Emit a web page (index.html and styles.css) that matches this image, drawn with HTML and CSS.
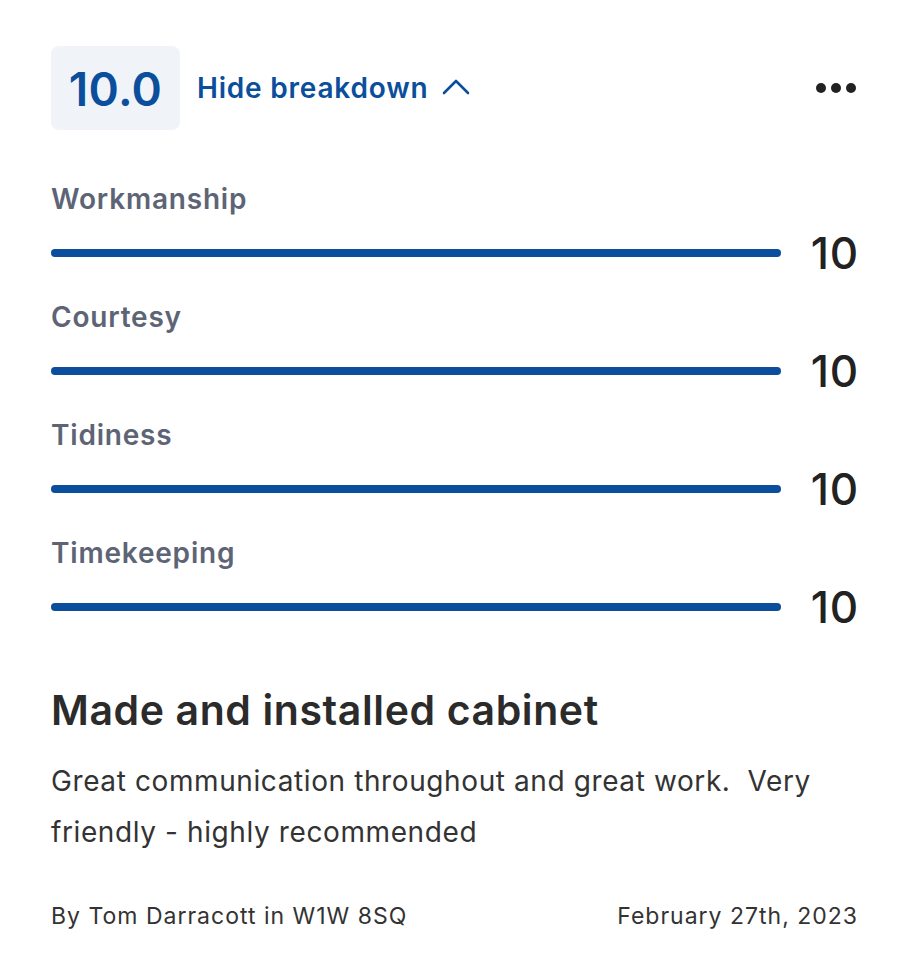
FILE: index.html
```html
<!DOCTYPE html>
<html lang="en">
<head>
    <meta charset="UTF-8">
    <meta name="viewport" content="width=device-width, initial-scale=1.0">
    <title>Review</title>
    <link rel="stylesheet" href="styles.css">
</head>
<body>
    <article class="review">
        <!-- Score header -->
        <header class="review-head">
            <div class="score-box">10.0</div>
            <button class="toggle">
                Hide breakdown
                <svg class="chevron" width="28" height="17" viewBox="0 0 28 17" fill="none">
                    <path d="M2 15 L14 3 L26 15" stroke="currentColor" stroke-width="2.6" stroke-linecap="round" stroke-linejoin="round"/>
                </svg>
            </button>
            <button class="more" aria-label="More">
                <span></span><span></span><span></span>
            </button>
        </header>

        <!-- Breakdown -->
        <ul class="breakdown">
            <li class="metric">
                <span class="metric-name">Workmanship</span>
                <div class="metric-row">
                    <div class="bar"><div class="bar-fill" style="width: 100%"></div></div>
                    <span class="metric-score">10</span>
                </div>
            </li>
            <li class="metric">
                <span class="metric-name">Courtesy</span>
                <div class="metric-row">
                    <div class="bar"><div class="bar-fill" style="width: 100%"></div></div>
                    <span class="metric-score">10</span>
                </div>
            </li>
            <li class="metric">
                <span class="metric-name">Tidiness</span>
                <div class="metric-row">
                    <div class="bar"><div class="bar-fill" style="width: 100%"></div></div>
                    <span class="metric-score">10</span>
                </div>
            </li>
            <li class="metric">
                <span class="metric-name">Timekeeping</span>
                <div class="metric-row">
                    <div class="bar"><div class="bar-fill" style="width: 100%"></div></div>
                    <span class="metric-score">10</span>
                </div>
            </li>
        </ul>

        <!-- Review body -->
        <h2 class="review-title">Made and installed cabinet</h2>
        <p class="review-text">Great communication throughout and great work.&nbsp; Very friendly - highly recommended</p>

        <footer class="review-foot">
            <span>By Tom Darracott in W1W 8SQ</span>
            <span>February 27th, 2023</span>
        </footer>
    </article>
</body>
</html>
```

FILE: styles.css
```css
/* Reset and base styles */
* {
    box-sizing: border-box;
    margin: 0;
    padding: 0;
}

body {
    font-family: Inter, "Noto Sans", Arial, sans-serif;
    background: #fff;
    color: #2b2b2b;
}

.review {
    padding: 46px 53px 0 51px;
}

/* Header */
.review-head {
    display: flex;
    align-items: center;
}

.score-box {
    width: 129px;
    height: 84px;
    display: flex;
    align-items: center;
    justify-content: center;
    background: #f0f4f9;
    border-radius: 8px;
    font-size: 46px;
    font-weight: 600;
    color: #0b4f9c;
    letter-spacing: 0.3px;
    padding-top: 2px;
}

.toggle {
    display: flex;
    align-items: center;
    gap: 14px;
    margin-left: 17px;
    background: none;
    border: none;
    font-family: inherit;
    font-size: 28px;
    font-weight: 600;
    letter-spacing: 0.8px;
    color: #0b4f9c;
    cursor: pointer;
}

.chevron {
    margin-top: -4px;
}

.more {
    display: flex;
    gap: 5px;
    margin-left: auto;
    margin-right: 2px;
    background: none;
    border: none;
    cursor: pointer;
}

.more span {
    width: 10px;
    height: 10px;
    border-radius: 50%;
    background: #222;
}

/* Breakdown */
.breakdown {
    list-style: none;
    margin-top: 52px;
}

.metric {
    height: 118px;
}

.metric-name {
    display: block;
    font-size: 28px;
    font-weight: 600;
    letter-spacing: 0.8px;
    color: #5d6475;
    line-height: 34px;
}

.metric-row {
    display: flex;
    align-items: center;
    gap: 30px;
    margin-top: 17px;
    height: 40px;
}

.bar {
    flex: 1;
    height: 8px;
    border-radius: 4px;
    background: #e4e9f0;
}

.bar-fill {
    height: 100%;
    border-radius: 4px;
    background: #0b4f9c;
}

.metric-score {
    font-size: 44px;
    font-weight: 500;
    letter-spacing: 0.8px;
    color: #222;
    line-height: 40px;
    margin-right: -1px;
}

/* Review body */
.review-title {
    margin-top: 30px;
    font-size: 41px;
    font-weight: 600;
    letter-spacing: 0.6px;
    color: #2b2b2b;
    line-height: 52px;
}

.review-text {
    margin-top: 20px;
    font-size: 28px;
    letter-spacing: 0.6px;
    line-height: 51px;
    color: #333;
}

.review-foot {
    display: flex;
    justify-content: space-between;
    margin-top: 44px;
    font-size: 23px;
    letter-spacing: 1px;
    line-height: 28px;
    color: #333;
}
```
